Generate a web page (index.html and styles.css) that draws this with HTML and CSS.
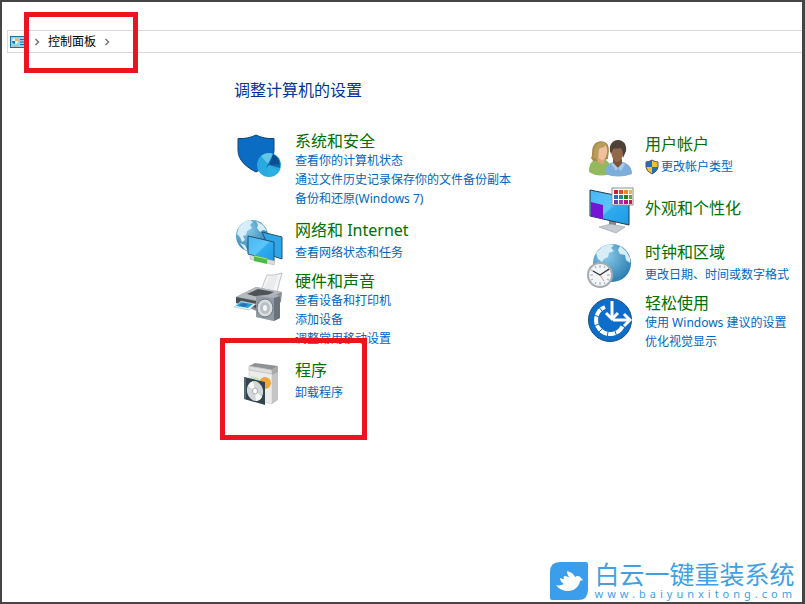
FILE: index.html
```html
<!DOCTYPE html>
<html lang="zh-CN">
  <head>
    <meta charset="UTF-8" />
    <meta name="viewport" content="width=device-width, initial-scale=1.0" />
    <title>控制面板</title>
    <link rel="stylesheet" href="styles.css">
  </head>

  <body>
    <nav class="addressBar">
      <svg class="addressIcon" viewBox="0 0 16 12">
        <rect x="0.5" y="0.5" width="15" height="11" fill="#8fd3f5" stroke="#1672a8" />
        <circle cx="5" cy="5" r="3" fill="#e9f6fd" />
        <path d="M5 5V2a3 3 0 0 1 3 3z" fill="#f2b233" />
        <path d="M5 5H2a3 3 0 0 0 3 3z" fill="#1679b8" />
        <path d="M10 3.500h4M10 6h4M10 8.500h4" stroke="#1672a8" />
        <path d="M3 10h5" stroke="#f2b233" />
      </svg>
      <svg class="chevron" viewBox="0 0 6 8"><path d="M1.500 1l3 3-3 3" /></svg>
      <a href="#">控制面板</a>
      <svg class="chevron" viewBox="0 0 6 8"><path d="M1.500 1l3 3-3 3" /></svg>
      <span class="mark markAddress"></span>
    </nav>

    <main class="panel">
      <h1>调整计算机的设置</h1>

      <div class="columns">
        <div class="column">
          <section class="item">
            <svg class="icon" viewBox="0 0 48 44">
              <path d="M4 6.500C11 7 17 5.500 22 3c5 2.500 11 4 18 3.500V18c0 10-8 17-18 22C12 35 4 28 4 18z" fill="#0b6cc4" stroke="#14456f" />
              <circle cx="35" cy="33" r="12" fill="#29a9df" />
              <path d="M27 24a12 12 0 0 1 12-2L35 33z" fill="#63c5ea" />
              <path d="M35 33l4-11a12 12 0 0 1 7 11z" fill="#0c4f91" />
              <path d="M35 33l-3 3 7-14zM35 33l11 3v-4z" fill="#1565a8" />
              <path d="M35 33l-2 11a12 12 0 0 0 11-5z" fill="#2bb0e2" />
            </svg>
            <div class="text">
              <h2><a href="#">系统和安全</a></h2>
              <a href="#">查看你的计算机状态</a>
              <a href="#">通过文件历史记录保存你的文件备份副本</a>
              <a href="#">备份和还原(Windows 7)</a>
            </div>
          </section>

          <section class="item spaced">
            <svg class="icon" viewBox="0 0 48 44">
              <defs>
                <radialGradient id="globe" cx="0.35" cy="0.3" r="0.8">
                  <stop offset="0" stop-color="#8ccbea" />
                  <stop offset="1" stop-color="#2378ae" />
                </radialGradient>
                <linearGradient id="screen" x1="0" y1="0" x2="1" y2="1">
                  <stop offset="0" stop-color="#49b5f2" />
                  <stop offset="0.5" stop-color="#5cc6fa" />
                  <stop offset="0.55" stop-color="#2fabee" />
                  <stop offset="1" stop-color="#1c9be6" />
                </linearGradient>
              </defs>
              <circle cx="18" cy="18" r="16" fill="url(#globe)" />
              <path d="M5 9l5-5 6-2 3 2-3 3 2 3-5 3-1 4-3 1 2 4-3 2-2-5-3-3zM22 3l7 4 4 6-4-1-3 2-3-4 1-3zM6 25l5 2 3 6-3-1z" fill="#d7edf7" />
              <path d="M28 14l20 5v22l-9-3z" fill="#2fa6e8" stroke="#27506e" />
              <path d="M14 18l26 6v19l-26-7z" fill="url(#screen)" stroke="#27506e" />
              <path d="M16 37l6 2v4l-6-2zM33 41l8 2-1 4-7-2z" fill="#d9dddc" stroke="#a4aaa9" stroke-width="0.5" />
              <path d="M20 37l13 3v6l-13-3z" fill="#4fba45" />
              <path d="M20 38l13 3" stroke="#a2e38e" />
            </svg>
            <div class="text">
              <h2><a href="#">网络和 Internet</a></h2>
              <a href="#">查看网络状态和任务</a>
            </div>
          </section>

          <section class="item">
            <svg class="icon iconTall" viewBox="0 0 48 52">
              <path d="M27 18l6-15q8 1 15-2-3 10-5 19z" fill="#f4f5f6" stroke="#a5a9ad" stroke-width="0.7" />
              <path d="M36 4l8 0-5 14-9-2z" fill="#e9ebed" />
              <path d="M2 25l20-10 26 5-1 10-22 10-23-9z" fill="#8b8f93" />
              <path d="M2 25l20-10 26 5-22 9z" fill="#b5b9bd" />
              <path d="M13 22l11-5 16 3-12 6z" fill="#4f5357" />
              <path d="M2 25l24 5v7L2 31z" fill="#4a4f53" />
              <path d="M7 29l15 3-7 6-15-3z" fill="#edf8fd" stroke="#8aa5b3" stroke-width="0.5" />
              <path d="M7 30l12 2-5 4-12-2z" fill="#20a1d7" />
              <path d="M5 33l5-2 4 2-4 2z" fill="#2b6fb0" />
              <path d="M22 24l18-2 6 2v22l-6 3-18-4z" fill="#aab1b8" />
              <path d="M22 24l18 2v23l-18-4z" fill="#929ba3" />
              <path d="M40 26l6-2v22l-6 3z" fill="#6a737b" />
              <ellipse cx="31" cy="36" rx="8" ry="9" fill="#d8dde0" stroke="#6d767e" />
              <ellipse cx="31" cy="36" rx="5" ry="6" fill="#b9c0c5" />
              <ellipse cx="31" cy="36" rx="2" ry="3" fill="#f2f4f5" />
            </svg>
            <div class="text">
              <h2><a href="#">硬件和声音</a></h2>
              <a href="#">查看设备和打印机</a>
              <a href="#">添加设备</a>
              <a href="#">调整常用移动设置</a>
            </div>
          </section>

          <section class="item spaced">
            <svg class="icon" viewBox="0 0 48 44">
              <path d="M15 11l23 4v31l-23-6z" fill="#ececec" stroke="#c2c2c2" stroke-width="0.5" />
              <path d="M38 15l6-4v31l-6 4z" fill="#c4c4c4" />
              <path d="M15 8l6-3 23 3-6 4z" fill="#8f9294" />
              <path d="M15 8l23 4v4l-23-4z" fill="#dedede" stroke="#aaa" stroke-width="0.5" />
              <path d="M38 12l6-4v6l-6 3z" fill="#a9a9a9" />
              <path d="M17 18l8 2v7l-8-2z" fill="#c8e2c0" />
              <circle cx="31" cy="25" r="6" fill="#f0a63b" />
              <path d="M10 19l21 5v23l-21-6z" fill="#33444f" />
              <path d="M10 19l2 0v22l-2 0z" fill="#566873" />
              <ellipse cx="21" cy="33" rx="8" ry="10" transform="rotate(-12 21 33)" fill="#d3d7d9" />
              <path d="M21 33l-7-5q2-4 5-5zM21 33l7 6q-2 4-6 4z" fill="#f8f9f9" />
              <ellipse cx="21" cy="33" rx="2.500" ry="3" fill="#fff" stroke="#a5adb2" />
            </svg>
            <div class="text">
              <h2><a href="#">程序</a></h2>
              <a href="#">卸载程序</a>
            </div>
            <span class="mark markPrograms"></span>
          </section>
        </div>

        <div class="column">
          <section class="item spaced">
            <svg class="icon" viewBox="0 0 48 44">
              <path d="M5 40c0-7 2-12 9-13h7l5 5v10q-12 4-21-2z" fill="#94b95c" />
              <path d="M7 26c2-3 0-9 3-13 3-5 11-5 14 0 2 5 0 11 0 14l-7 2H9z" fill="#a88c4e" />
              <path d="M12 24l2 6 5 3 2-7z" fill="#dba67e" />
              <path d="M13 15q6 0 8-3 3 5 2 9c-1 5-3 8-5 7-4-1-6-7-5-13z" fill="#efc09b" />
              <path d="M9 26c2-5 0-10 4-14q5-3 9 0-1 4-6 4c-2 2-1 6-2 10z" fill="#b99d5a" />
              <path d="M21 42c0-7 3-11 9-12h9c6 2 9 6 9 12q-14 5-27 0z" fill="#7dadd9" />
              <path d="M29 27h9v4l-4 5-5-5z" fill="#7c543a" />
              <path d="M27 17c0-4 3-7 7-7s6 3 6 8-3 12-7 12-6-7-6-13z" fill="#91684a" />
              <path d="M26 19c-1-7 3-11 8-11 6 0 9 5 8 11l-3 7c0-3 0-7-2-10-3 1-6 0-8 1l-2 5z" fill="#4d4138" />
              <path d="M29 31l5 5-2 3-5-7zM39 31l-5 5 3 3 4-7z" fill="#a8cbea" />
            </svg>
            <div class="text">
              <h2><a href="#">用户帐户</a></h2>
              <a class="shieldLink" href="#">
                <svg class="shield" viewBox="0 0 14 16">
                  <path d="M7 1q3 2 6 2v5q0 4-6 7-6-3-6-7V3q3 0 6-2z" fill="#f7bf32" />
                  <path d="M7 1v7H1V3q3 0 6-2zM7 8h6q0 4-6 7z" fill="#1e72bd" />
                  <path d="M7 1q3 2 6 2v5q0 4-6 7-6-3-6-7V3q3 0 6-2z" fill="none" stroke="#53565a" />
                </svg>
                更改帐户类型
              </a>
            </div>
          </section>

          <section class="item centered">
            <svg class="icon" viewBox="0 0 48 44">
              <path d="M25 34l7 2v6l-7-1z" fill="#7e8990" />
              <path d="M15 41l12-3 14 3-9 6z" fill="#c5cbd0" stroke="#89939a" stroke-width="0.5" />
              <path d="M6 4l39 8v27L6 30z" fill="url(#screen)" stroke="#25394b" />
              <path d="M7 16l12 3v14L7 30z" fill="#7514d2" />
              <rect x="28" y="2" width="21" height="17" fill="#fff" stroke="#8d8d8d" />
              <path d="M30 4h4v4h-4z" fill="#c52626" />
              <path d="M35 4h4v4h-4z" fill="#e84821" />
              <path d="M40 4h4v4h-4z" fill="#f18a1c" />
              <path d="M45 4h3v4h-3z" fill="#f6b51f" />
              <path d="M30 9h4v4h-4z" fill="#286bc1" />
              <path d="M35 9h4v4h-4z" fill="#1e8b91" />
              <path d="M40 9h4v4h-4z" fill="#257d2b" />
              <path d="M45 9h3v4h-3z" fill="#62aa32" />
              <path d="M30 14h4v4h-4z" fill="#6942a5" />
              <path d="M35 14h4v4h-4z" fill="#9b3caf" />
              <path d="M40 14h4v4h-4z" fill="#b9147e" />
              <path d="M45 14h3v4h-3z" fill="#dc1257" />
            </svg>
            <div class="text">
              <h2><a href="#">外观和个性化</a></h2>
            </div>
          </section>

          <section class="item spaced">
            <svg class="icon" viewBox="0 0 48 44">
              <circle cx="28" cy="23" r="19" fill="url(#globe)" />
              <path d="M12 13l6-6 7-3 5 1-3 3 3 3-5 2-1 4-4 2-2 3-4-3zM36 6l6 5 4 7 0 5-4-3-1-5-5-1-2-4z" fill="#d7edf7" />
              <circle cx="16" cy="35" r="12" fill="#f3f4f5" stroke="#a5abaf" stroke-width="2" />
              <path d="M16 25v3M16 42v3M6 35h3M23 35h3M11 26l1 2M21 26l-1 2M7 30l2 1M25 30l-2 1M7 40l2-1M25 40l-2-1M11 44l1-2M21 44l-1-2" stroke="#8c959b" stroke-width="0.8" />
              <path d="M9 31l7 4 9-6" fill="none" stroke="#2b333a" stroke-width="1.200" />
              <path d="M16 35l4 6" stroke="#d46458" stroke-width="0.7" />
            </svg>
            <div class="text">
              <h2><a href="#">时钟和区域</a></h2>
              <a href="#">更改日期、时间或数字格式</a>
            </div>
          </section>

          <section class="item">
            <svg class="icon" viewBox="0 0 48 44">
              <circle cx="26" cy="26" r="21.500" fill="#0d6dc8" stroke="#164e83" />
              <path d="M21 13A14 14 0 1 0 38.500 32.500" fill="none" stroke="#fff" stroke-width="4" />
              <path d="M18 17l-4-5M15 23l-5-2M15 30l-5 2M18 35l-4 4M24 38l-1 6M31 37l2 6" stroke="#0d6dc8" />
              <path d="M28 7v17" stroke="#fff" stroke-width="3" />
              <path d="M22 19l6 6 6-6" fill="none" stroke="#fff" stroke-width="3" />
              <path d="M29 26h17" stroke="#fff" stroke-width="3" />
              <path d="M40 20l6 6-6 6" fill="none" stroke="#fff" stroke-width="3" />
            </svg>
            <div class="text">
              <h2><a href="#">轻松使用</a></h2>
              <a href="#">使用 Windows 建议的设置</a>
              <a href="#">优化视觉显示</a>
            </div>
          </section>
        </div>
      </div>
    </main>

    <footer class="brand">
      <svg class="brandLogo" viewBox="0 0 38 38">
        <path d="M10 0h26q2 0 2 2v26q0 10-10 10H2q-2 0-2-2V10Q0 0 10 0z" fill="#3a9eea" />
        <path d="M6 23c3 1 6 0 8-1-2-1-4-3-4-6 2 1 3 1 4 1-1-2 0-3 1-3 3 1 4 1 5 2-2-2-3-4-3-7 4 1 7 3 8 6 2-2 5-1 6 1l2 2-3 1c-1 6-6 10-12 10-5 0-9-2-12-6z" fill="#fff" />
      </svg>
      <div class="brandText">
        <span class="brandName">白云一键重装系统</span>
        <span class="brandUrl">www.baiyunxitong.com</span>
      </div>
    </footer>
  </body>
</html>
```
FILE: styles.css
```css
* {
  box-sizing: border-box;
}

body {
  position: relative;
  min-height: 100vh;
  margin: 0;
  padding-top: 28px;
  border: 2px solid #454545;
  border-right-width: 3px;
  background-color: #fff;
  font-family: "Noto Sans", "Noto Sans CJK SC", sans-serif;
  font-size: 12px;
  line-height: 19px;
}

a {
  color: #0066bf;
  text-decoration: none;
}

a:hover {
  text-decoration: underline;
}

.addressBar {
  position: relative;
  display: flex;
  align-items: center;
  gap: 8px;
  height: 23px;
  margin-left: 5px;
  padding-left: 2px;
  border: 1px solid #d9d9d9;
  border-right: none;
}

.addressBar a {
  color: #000;
}

.addressIcon {
  width: 16px;
  height: 12px;
}

.chevron {
  width: 6px;
  height: 8px;
  fill: none;
  stroke: #777;
  stroke-width: 1.5;
}

/* red highlight frames */
.mark {
  position: absolute;
  border: 5px solid #ea1520;
  pointer-events: none;
}

.markAddress {
  left: 16px;
  top: -19px;
  width: 114px;
  height: 61px;
}

.markPrograms {
  left: -14px;
  top: -20px;
  width: 147px;
  height: 102px;
}

.panel {
  padding: 26px 0 0 232px;
}

h1 {
  margin: 0 0 31px;
  color: #003399;
  font-size: 16px;
  font-weight: normal;
  line-height: 22px;
}

.columns {
  display: grid;
  grid-template-columns: 350px 1fr;
}

.column {
  display: flex;
  flex-direction: column;
  gap: 10px;
}

.item {
  position: relative;
  display: flex;
  align-items: flex-start;
  gap: 13px;
}

.icon {
  flex: none;
  width: 48px;
  height: 44px;
  overflow: visible;
}

.iconTall {
  height: 52px;
}

.text {
  display: flex;
  flex-direction: column;
  align-items: flex-start;
  white-space: nowrap;
}

.spaced .text {
  gap: 3px;
  padding-top: 3px;
}

.centered {
  align-items: center;
}

h2 {
  margin: 0;
  font-size: 16px;
  font-weight: normal;
  line-height: 19px;
}

h2 a {
  color: #007000;
}

.shieldLink {
  display: flex;
  align-items: center;
  gap: 2px;
}

.shield {
  width: 14px;
  height: 16px;
}

.brand {
  position: absolute;
  right: 6px;
  bottom: 2px;
  display: flex;
  align-items: center;
  gap: 7px;
  color: #429fe3;
}

.brandLogo {
  width: 38px;
  height: 38px;
}

.brandText {
  display: flex;
  flex-direction: column;
}

.brandName {
  font-size: 25px;
  line-height: 27px;
}

.brandUrl {
  font-size: 11px;
  line-height: 12px;
  letter-spacing: 4px;
}
```
